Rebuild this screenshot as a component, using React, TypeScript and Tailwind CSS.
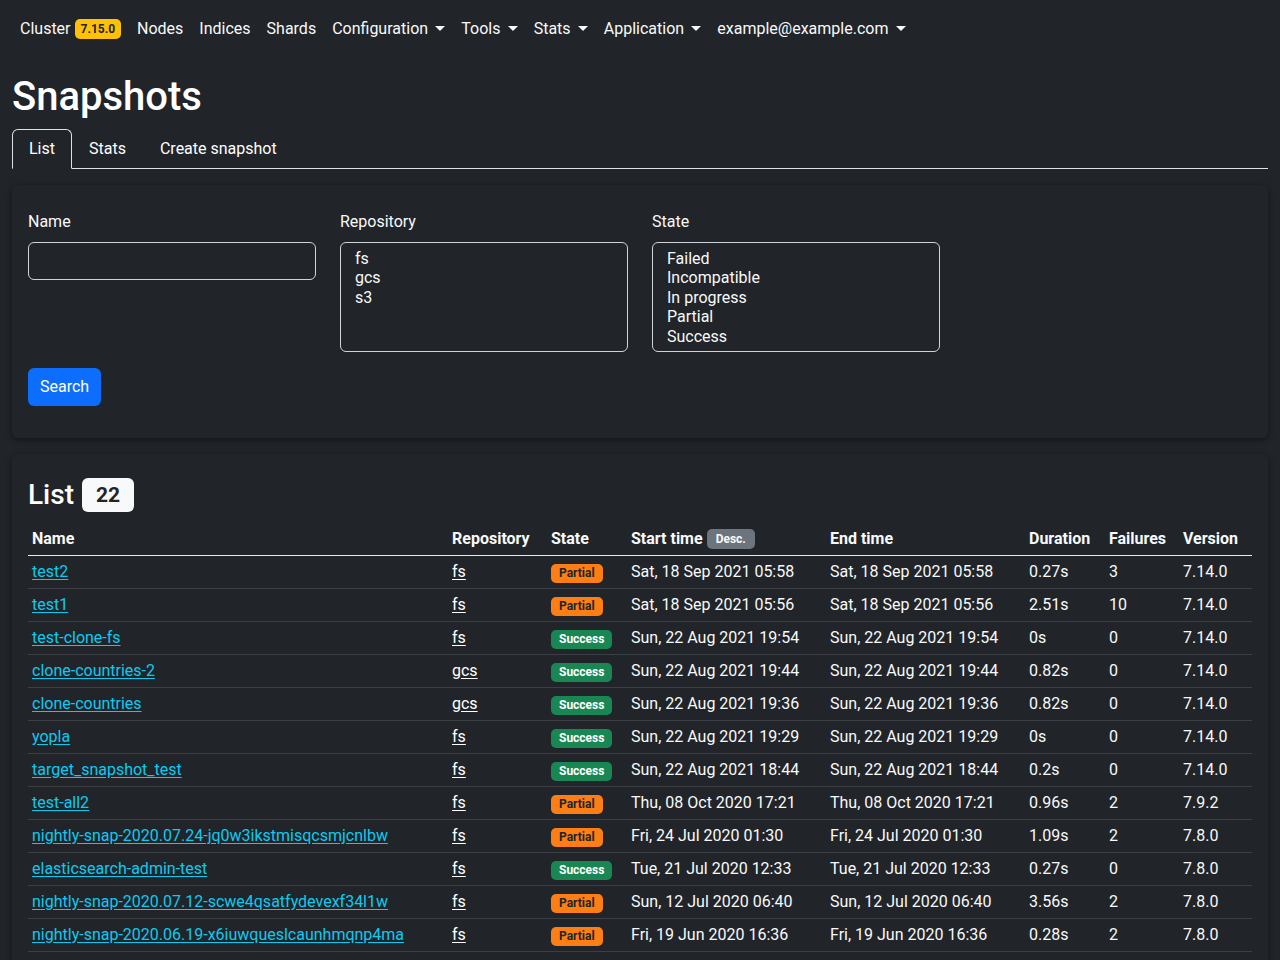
import React from "react";

type Row = [string, string, "Partial" | "Success", string, string, string, string, string];

const rows: Row[] = [
  ["test2", "fs", "Partial", "Sat, 18 Sep 2021 05:58", "Sat, 18 Sep 2021 05:58", "0.27s", "3", "7.14.0"],
  ["test1", "fs", "Partial", "Sat, 18 Sep 2021 05:56", "Sat, 18 Sep 2021 05:56", "2.51s", "10", "7.14.0"],
  ["test-clone-fs", "fs", "Success", "Sun, 22 Aug 2021 19:54", "Sun, 22 Aug 2021 19:54", "0s", "0", "7.14.0"],
  ["clone-countries-2", "gcs", "Success", "Sun, 22 Aug 2021 19:44", "Sun, 22 Aug 2021 19:44", "0.82s", "0", "7.14.0"],
  ["clone-countries", "gcs", "Success", "Sun, 22 Aug 2021 19:36", "Sun, 22 Aug 2021 19:36", "0.82s", "0", "7.14.0"],
  ["yopla", "fs", "Success", "Sun, 22 Aug 2021 19:29", "Sun, 22 Aug 2021 19:29", "0s", "0", "7.14.0"],
  ["target_snapshot_test", "fs", "Success", "Sun, 22 Aug 2021 18:44", "Sun, 22 Aug 2021 18:44", "0.2s", "0", "7.14.0"],
  ["test-all2", "fs", "Partial", "Thu, 08 Oct 2020 17:21", "Thu, 08 Oct 2020 17:21", "0.96s", "2", "7.9.2"],
  ["nightly-snap-2020.07.24-jq0w3ikstmisqcsmjcnlbw", "fs", "Partial", "Fri, 24 Jul 2020 01:30", "Fri, 24 Jul 2020 01:30", "1.09s", "2", "7.8.0"],
  ["elasticsearch-admin-test", "fs", "Success", "Tue, 21 Jul 2020 12:33", "Tue, 21 Jul 2020 12:33", "0.27s", "0", "7.8.0"],
  ["nightly-snap-2020.07.12-scwe4qsatfydevexf34l1w", "fs", "Partial", "Sun, 12 Jul 2020 06:40", "Sun, 12 Jul 2020 06:40", "3.56s", "2", "7.8.0"],
  ["nightly-snap-2020.06.19-x6iuwqueslcaunhmqnp4ma", "fs", "Partial", "Fri, 19 Jun 2020 16:36", "Fri, 19 Jun 2020 16:36", "0.28s", "2", "7.8.0"],
  ["nightly-snap-2020.06.12-r2kd8fmqzpl0xwvnbaetuc", "fs", "Partial", "Fri, 12 Jun 2020 16:30", "Fri, 12 Jun 2020 16:30", "0.31s", "2", "7.8.0"],
  ["nightly-snap-2020.06.05-h7yqsnvkc4mbw1lzp0tjxa", "fs", "Success", "Fri, 05 Jun 2020 16:30", "Fri, 05 Jun 2020 16:30", "0.25s", "0", "7.7.1"],
];

function Caret() {
  return (
    <span className="inline-block ml-[0.45em] align-[0.2em] border-t-[0.32em] border-x-[0.32em] border-b-0 border-t-current border-x-transparent" />
  );
}

function NavItem({ label, dropdown }: { label: string; dropdown?: boolean }) {
  return (
    <a className="px-2 py-2 leading-6 text-[#f8f9fa] cursor-pointer whitespace-nowrap">
      {label}
      {dropdown && <Caret />}
    </a>
  );
}

function StateBadge({ state }: { state: "Partial" | "Success" }) {
  if (state === "Partial") {
    return (
      <span className="inline-block rounded-[5px] bg-[#fd7e14] px-[8px] py-[3px] text-[12px] font-bold leading-[13px] text-[#212529]">
        Partial
      </span>
    );
  }
  return (
    <span className="inline-block rounded-[5px] bg-[#198754] px-[8px] py-[3px] text-[12px] font-bold leading-[13px] text-white">
      Success
    </span>
  );
}

export default function App() {
  return (
    <div className="min-h-screen bg-[#212529] text-[16px] leading-6 text-[#f8f9fa] font-['Roboto','Noto_Sans',sans-serif]">
      {/* Navbar */}
      <nav className="flex items-center h-[57px] px-3 pt-[1px]">
        <a className="flex items-center px-2 py-2 leading-6 text-[#f8f9fa]">
          Cluster
          <span className="ml-[4px] rounded-[5px] bg-[#ffc107] px-[6px] py-[3px] text-[12px] font-bold leading-[14px] text-[#212529]">
            7.15.0
          </span>
        </a>
        <NavItem label="Nodes" />
        <NavItem label="Indices" />
        <NavItem label="Shards" />
        <NavItem label="Configuration" dropdown />
        <NavItem label="Tools" dropdown />
        <NavItem label="Stats" dropdown />
        <NavItem label="Application" dropdown />
        <NavItem label="example@example.com" dropdown />
      </nav>

      <div className="px-3 pt-4">
        <h1 className="text-[40px] font-medium leading-[48px] mb-2 text-white">Snapshots</h1>

        {/* Tabs */}
        <div className="flex border-b border-[#dee2e6]">
          <a className="-mb-px rounded-t-[6px] border border-[#dee2e6] border-b-[#212529] bg-[#212529] px-4 py-[7px] leading-6 text-white">
            List
          </a>
          <a className="-mb-px border border-transparent px-4 py-[7px] leading-6 text-white">Stats</a>
          <a className="-mb-px border border-transparent px-4 py-[7px] leading-6 text-white">Create snapshot</a>
        </div>

        {/* Filter card */}
        <div className="mt-4 rounded-[6px] bg-[#212529] shadow-[0_2px_6px_rgba(0,0,0,0.45)] px-4 pt-[25px] pb-8">
          <div className="grid grid-cols-4 gap-x-6">
            <div>
              <label className="block mb-2 leading-6">Name</label>
              <div className="h-[38px] rounded-[6px] border border-[#ced4da] bg-[#212529]" />
            </div>
            <div>
              <label className="block mb-2 leading-6">Repository</label>
              <div className="h-[110px] rounded-[6px] border border-[#ced4da] bg-[#212529] px-[14px] py-[6px] leading-[19.4px]">
                <div>fs</div>
                <div>gcs</div>
                <div>s3</div>
              </div>
            </div>
            <div>
              <label className="block mb-2 leading-6">State</label>
              <div className="h-[110px] rounded-[6px] border border-[#ced4da] bg-[#212529] px-[14px] py-[6px] leading-[19.4px]">
                <div>Failed</div>
                <div>Incompatible</div>
                <div>In progress</div>
                <div>Partial</div>
                <div>Success</div>
              </div>
            </div>
          </div>
          <button className="mt-4 h-[38px] rounded-[6px] bg-[#0d6efd] px-3 leading-6 text-white">Search</button>
        </div>

        {/* List card */}
        <div className="mt-4 rounded-[6px] bg-[#212529] shadow-[0_2px_6px_rgba(0,0,0,0.45)] px-4 pt-6 pb-6">
          <h3 className="mb-[11px] flex items-center text-[28px] font-medium leading-[34px] text-white">
            List
            <span className="ml-2 rounded-[6px] bg-[#f8f9fa] px-[14px] py-[6px] text-[21px] font-bold leading-[22px] text-[#212529]">
              22
            </span>
          </h3>
          <table className="w-full table-fixed border-collapse text-left">
            <colgroup>
              <col className="w-[420px]" />
              <col className="w-[99px]" />
              <col className="w-[80px]" />
              <col className="w-[199px]" />
              <col className="w-[199px]" />
              <col className="w-[80px]" />
              <col className="w-[74px]" />
              <col />
            </colgroup>
            <thead>
              <tr className="border-b-[1.5px] border-[#e9ecef]">
                <th className="px-1 py-1 font-bold">Name</th>
                <th className="px-1 py-1 font-bold">Repository</th>
                <th className="px-1 py-1 font-bold">State</th>
                <th className="px-1 py-1 font-bold whitespace-nowrap">
                  Start time
                  <span className="ml-[4px] inline-block rounded-[5px] bg-[#6c757d] px-[9px] py-[4px] text-[12px] font-bold leading-[12px] text-[#f8f9fa] align-[1px]">
                    Desc.
                  </span>
                </th>
                <th className="px-1 py-1 font-bold">End time</th>
                <th className="px-1 py-1 font-bold">Duration</th>
                <th className="px-1 py-1 font-bold">Failures</th>
                <th className="px-1 py-1 font-bold">Version</th>
              </tr>
            </thead>
            <tbody>
              {rows.map((r, i) => (
                <tr key={i} className="border-b border-[#3b3f44]">
                  <td className="px-1 py-1 whitespace-nowrap">
                    <a className="text-[#0dcaf0] underline underline-offset-[2px]">{r[0]}</a>
                  </td>
                  <td className="px-1 py-1">
                    <a className="text-white underline underline-offset-[2px]">{r[1]}</a>
                  </td>
                  <td className="px-1 py-1">
                    <StateBadge state={r[2]} />
                  </td>
                  <td className="px-1 py-1 whitespace-nowrap">{r[3]}</td>
                  <td className="px-1 py-1 whitespace-nowrap">{r[4]}</td>
                  <td className="px-1 py-1">{r[5]}</td>
                  <td className="px-1 py-1">{r[6]}</td>
                  <td className="px-1 py-1">{r[7]}</td>
                </tr>
              ))}
            </tbody>
          </table>
        </div>
      </div>
    </div>
  );
}
